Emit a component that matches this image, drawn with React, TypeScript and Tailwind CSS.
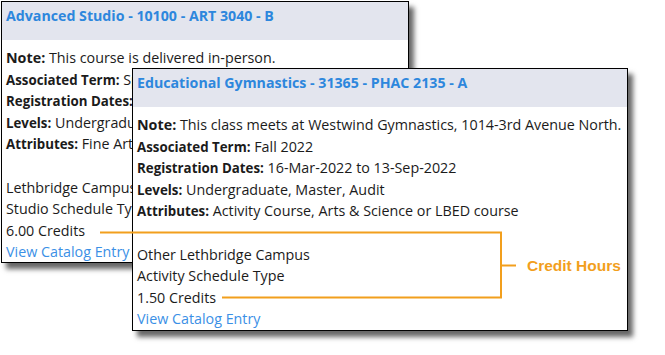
import React from 'react';

type Row = { label?: string; value?: string; big?: boolean };

const Section: React.FC<{
  title: string;
  rows: Row[];
  lines: string[];
  className: string;
}> = ({ title, rows, lines, className }) => (
  <div
    className={`absolute bg-white border border-black shadow-[5px_6px_5px_rgba(0,0,0,0.6)] overflow-hidden ${className}`}
  >
    {/* Header */}
    <div className="h-[38px] bg-[#e3e5ee] px-[4px] pt-[3px]">
      <div className="text-[14.2px] leading-[22px] font-bold text-[#2d87dd] whitespace-nowrap">{title}</div>
    </div>

    {/* Body */}
    <div className="px-[4px] pt-[7px] text-[14.3px] leading-[21.6px] text-[#1b1b1b] whitespace-nowrap">
      {rows.map((r, i) => (
        <div key={i} className="h-[21.6px]">
          <span className={`font-bold leading-none ${r.big ? 'text-[14.3px]' : 'text-[13.3px]'}`}>{r.label}</span> {r.value}
        </div>
      ))}
      <div className="h-[21.6px]"></div>
      {lines.map((l, i) => (
        <div key={i} className="h-[21.6px]">{l}</div>
      ))}
      <div className="h-[21.6px] text-[#3b90e6]">View Catalog Entry</div>
    </div>
  </div>
);

export default function App() {
  return (
    <div className="relative w-[665px] h-[355px] bg-white overflow-hidden font-['Open_Sans',sans-serif]">
      <Section
        className="left-[1px] top-[1px] w-[408px] h-[262px]"
        title="Advanced Studio - 10100 - ART 3040 - B"
        rows={[
          { label: 'Note:', value: 'This course is delivered in-person.', big: true },
          { label: 'Associated Term:', value: 'Spring 2022' },
          { label: 'Registration Dates:', value: '16-Mar-2022 to 13-Sep-2022' },
          { label: 'Levels:', value: 'Undergraduate' },
          { label: 'Attributes:', value: 'Fine Arts' },
        ]}
        lines={['Lethbridge Campus', 'Studio Schedule Type', '6.00 Credits']}
      />

      <Section
        className="left-[132px] top-[68px] w-[496px] h-[263px]"
        title="Educational Gymnastics - 31365 - PHAC 2135 - A"
        rows={[
          { label: 'Note:', value: 'This class meets at Westwind Gymnastics, 1014-3rd Avenue North.', big: true },
          { label: 'Associated Term:', value: 'Fall 2022' },
          { label: 'Registration Dates:', value: '16-Mar-2022 to 13-Sep-2022' },
          { label: 'Levels:', value: 'Undergraduate, Master, Audit' },
          { label: 'Attributes:', value: 'Activity Course, Arts & Science or LBED course' },
        ]}
        lines={['Other Lethbridge Campus', 'Activity Schedule Type', '1.50 Credits']}
      />

      {/* Credit hours callout */}
      <svg className="absolute inset-0 pointer-events-none" width="665" height="355">
        <g stroke="#f29f1d" strokeWidth="2" fill="none">
          <path d="M100 232.5 H501 V297.5 H222" />
          <path d="M501 265.5 H516" />
        </g>
      </svg>
      <span className="absolute left-[527px] top-[256px] text-[15.5px] leading-[20px] font-bold text-[#f29f1d] font-['Liberation_Sans',sans-serif]">
        Credit Hours
      </span>
    </div>
  );
}
